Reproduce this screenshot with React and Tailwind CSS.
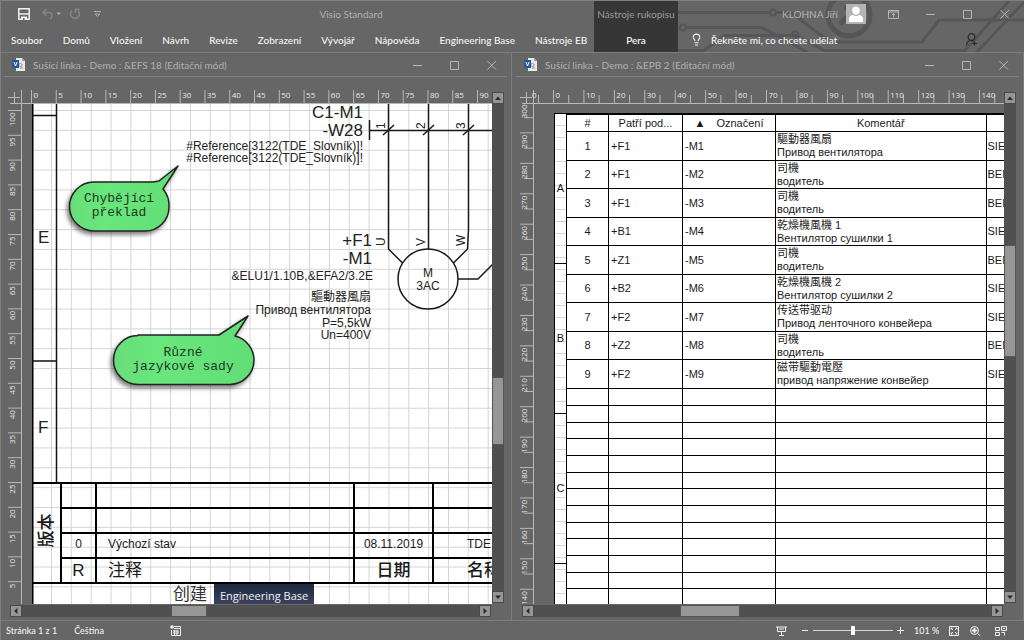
import React, { useState } from 'react';
import { Lightbulb } from 'lucide-react';

const tabs = ['Domů', 'Vložení', 'Návrh', 'Revize', 'Zobrazení', 'Vývojář', 'Nápověda', 'Engineering Base', 'Nástroje EB'];

const rows = [
    { owner: '+F1', mark: '-M1', cjk: '驅動器風扇', ru: 'Привод вентилятора', maker: 'SIEMENS' },
    { owner: '+F1', mark: '-M2', cjk: '司機', ru: 'водитель', maker: 'BENDER' },
    { owner: '+F1', mark: '-M3', cjk: '司機', ru: 'водитель', maker: 'BENDER' },
    { owner: '+B1', mark: '-M4', cjk: '乾燥機風機 1', ru: 'Вентилятор сушилки 1', maker: 'SIEMENS' },
    { owner: '+Z1', mark: '-M5', cjk: '司機', ru: 'водитель', maker: 'BENDER' },
    { owner: '+B2', mark: '-M6', cjk: '乾燥機風機 2', ru: 'Вентилятор сушилки 2', maker: 'SIEMENS' },
    { owner: '+F2', mark: '-M7', cjk: '传送带驱动', ru: 'Привод ленточного конвейера', maker: 'SIEMENS' },
    { owner: '+Z2', mark: '-M8', cjk: '司機', ru: 'водитель', maker: 'BENDER' },
    { owner: '+F2', mark: '-M9', cjk: '磁带驅動電壓', ru: 'привод напряжение конвейер', maker: 'SIEMENS' },
];

const range = (n) => Array.from({ length: n }, (_, i) => i);

const MinIcon = () => (
    <svg width="10" height="10" viewBox="0 0 10 10" stroke="currentColor"><path d="M0 5.500h9" /></svg>
);
const MaxIcon = () => (
    <svg width="10" height="10" viewBox="0 0 10 10" fill="none" stroke="currentColor"><path d="M.5 1.500h8v8h-8z" /></svg>
);
const CloseIcon = () => (
    <svg width="10" height="10" viewBox="0 0 10 10" stroke="currentColor"><path d="M.5 1l8.500 8.500M9 1L.5 9.500" /></svg>
);

const WindowButtons = () => (
    <div className="flex items-center gap-[27px] text-[#b4b4b4]">
        <button aria-label="Minimalizovat"><MinIcon /></button>
        <button aria-label="Maximalizovat"><MaxIcon /></button>
        <button aria-label="Zavřít"><CloseIcon /></button>
    </div>
);

const Circuit = () => (
    <svg className="absolute inset-0 w-full h-full" fill="none" stroke="#565656" strokeWidth="3">
        <path d="M0 11.500h91M99 11.500h14l39 29.500h92l17 -22h90" />
        <circle cx="95" cy="11.500" r="3" strokeWidth="2" />
        <circle cx="5" cy="26.500" r="3" strokeWidth="2" />
        <path d="M9 26.500h75l46 25" />
        <path d="M0 49.500h26l20 -15h73l27 15h141l46 -52M298 52l49 -52" />
        <circle cx="117" cy="33.500" r="3" strokeWidth="2" />
        <circle cx="171" cy="14" r="21" strokeWidth="5" />
        <path d="M162 23l15 -15M166 7h12v12" strokeWidth="5" />
    </svg>
);

const Header = () => (
    <header className="relative flex h-[52px] border-t border-[#808080] text-[10px]">
        <div className="flex w-[594px] flex-none flex-col">
            <div className="flex h-[26px] items-center text-[#b0b0b0]">
                <div className="flex w-[108px] items-center pl-[18px]">
                    <button aria-label="Uložit" className="text-[#f0f0f0]">
                        <svg width="12" height="12" viewBox="0 0 12 12" fill="none" stroke="currentColor" strokeWidth="1.500">
                            <path d="M.8 .8h10.400v10.400H.8zM1 6h10" />
                            <path d="M3 8.500h6v3H3z" fill="currentColor" stroke="none" />
                            <path d="M5 10h1.500v2H5z" fill="#666" stroke="none" />
                        </svg>
                    </button>
                    <button aria-label="Zpět" className="ml-[12px] text-[#858585]">
                        <svg width="19" height="12" viewBox="0 0 19 12" fill="none" stroke="currentColor" strokeWidth="1.500">
                            <path d="M4.500 1L1 4.500 4.500 8M1 4.500h6a3 3 0 0 1 3 3c0 1.500-.7 2.500-2 3.500" />
                            <path d="M14.500 4.500h4.500l-2.200 2.500z" fill="#b0b0b0" stroke="none" />
                        </svg>
                    </button>
                    <button aria-label="Znovu" className="ml-[8px] text-[#858585]">
                        <svg width="12" height="12" viewBox="0 0 12 12" fill="none" stroke="currentColor" strokeWidth="1.500">
                            <path d="M3 2.500A4.500 4.500 0 1 0 9 2.500M6.500 5V1.200h4" />
                        </svg>
                    </button>
                    <button aria-label="Přizpůsobit panel" className="ml-[13px]">
                        <svg width="7" height="7" viewBox="0 0 7 7" fill="none" stroke="currentColor"><path d="M0 .5h7M1 3l2.500 2.500L6 3z" /></svg>
                    </button>
                </div>
                <h1 className="flex-1 text-center">Visio Standard</h1>
            </div>
            <nav className="flex flex-1 items-center gap-5 pl-[11px] font-medium text-[#f5f5f5]">
                <button>Soubor</button>
                {tabs.map((tab) => <button key={tab} className="whitespace-nowrap">{tab}</button>)}
            </nav>
        </div>
        <div className="flex w-[84px] flex-none flex-col bg-[#363636]">
            <span className="flex h-[26px] items-center justify-center whitespace-nowrap text-[#9a9a9a]">Nástroje rukopisu</span>
            <button className="flex-1 font-medium text-white">Pera</button>
        </div>
        <div className="relative flex min-w-0 flex-1 flex-col overflow-hidden">
            <Circuit />
            <div className="relative flex h-[26px] items-center justify-end pr-[14px] text-[#b4b4b4]">
                <span>KLOHNA Jiří</span>
                <svg className="ml-[8px] mr-[22px]" width="20" height="20" viewBox="0 0 20 20">
                    <path d="M0 0h20v20H0z" fill="#b4b4b4" />
                    <path d="M10 2.500c2.500 0 3.800 1.700 3.800 4s-1.500 4.300-3.800 4.300-3.800-2-3.800-4.300 1.300-4 3.800-4zM3 18v-3c0-2.500 2-4 4-4 2 1.200 4 1.200 6 0 2 0 4 1.500 4 4v3z" fill="#fff" />
                </svg>
                <button aria-label="Zobrazení pásu karet" className="mr-[27px]">
                    <svg width="11" height="9" viewBox="0 0 11 9" fill="none" stroke="currentColor"><path d="M.5 .5h10v8H.5zM.5 2h10M5.500 7.500v-4M4 5l1.500-1.500L7 5" /></svg>
                </button>
                <WindowButtons />
            </div>
            <div className="relative flex flex-1 items-center pl-[12px] pr-[46px] text-[#f5f5f5]">
                <Lightbulb size={13} strokeWidth={2} />
                <input
                    aria-label="Řekněte mi"
                    placeholder="Řekněte mi, co chcete udělat"
                    className="ml-2 w-0 flex-1 bg-transparent font-medium outline-none placeholder:text-[#f5f5f5]"
                />
                <button aria-label="Sdílet" className="text-[#2b2b2b]">
                    <svg width="12" height="13" viewBox="0 0 12 13" fill="none" stroke="currentColor" strokeWidth="1.200">
                        <circle cx="5.500" cy="4" r="3.300" />
                        <path d="M.6 12.500c0-3 2-5 4.600-5 1 0 1.800.2 2.500.7M8.500 8.500v4M6.500 10.500h4.500" />
                    </svg>
                </button>
            </div>
        </div>
    </header>
);

const Arrow = ({ d, label }) => (
    <button aria-label={label} className="flex h-[12px] w-[12px] flex-none items-center justify-center border border-[#4a4a4a] bg-[#969696]">
        <svg width="6" height="6" viewBox="0 0 6 6" fill="#2b2b2b"><path d={d} /></svg>
    </button>
);

const VScroll = ({ start, size }) => (
    <div className="mt-[2px] flex h-[511px] max-h-full w-[12px] flex-col bg-[#505050]">
        <Arrow label="Nahoru" d="M0 5l3-3.500L6 5z" />
        <div className="relative flex-1">
            <div className="absolute inset-x-0 border border-[#555] bg-[#969696]" style={{ top: `${start}%`, height: `${size}%` }}></div>
        </div>
        <Arrow label="Dolů" d="M0 1.500L3 5l3-3.500z" />
    </div>
);

const HScroll = ({ start, size }) => (
    <div className="ml-[10px] mr-px mt-px flex h-[12px] bg-[#505050]">
        <Arrow label="Doleva" d="M4.500 0L1 3l3.500 3z" />
        <div className="relative flex-1">
            <div className="absolute inset-y-0 border border-[#555] bg-[#969696]" style={{ left: `${start}%`, width: `${size}%` }}></div>
        </div>
        <Arrow label="Doprava" d="M1.500 0L5 3 1.500 6z" />
    </div>
);

const HRuler = ({ origin, step, unit, count, minor }) => (
    <svg className="h-[14px] w-full flex-none" stroke="#b8b8b8">
        <path d="M8 7.500h12M14.500 2v11M21.500 0v14M10 13.500h2000" />
        {range(count).map((i) => {
            const x = origin + i * step;
            return (
                <g key={i}>
                    <path d={`M${x} 0v13`} />
                    {minor && <path d={`M${x + step / 2} 5v8`} />}
                    <text x={x + 2} y="8" fontSize="8" fill="#e8e8e8" stroke="none">{i * unit}</text>
                </g>
            );
        })}
        {minor && <path d="M26.500 5v8" />}
        {minor && <text x="20" y="8" fontSize="8" fill="#e8e8e8" stroke="none">0</text>}
    </svg>
);

const VRuler = ({ origin, step, unit, first, count, minor }) => (
    <svg className="h-full w-[22px] flex-none" stroke="#b8b8b8">
        <path d="M21.500 0v2000" />
        {range(count).map((i) => {
            const y = origin + i * step;
            return (
                <g key={i}>
                    <path d={`M8 ${y}h13`} />
                    {minor && <path d={`M12 ${y + step / 2}h9`} />}
                    <text transform={`translate(15 ${y + 2}) rotate(-90)`} textAnchor="end" fontSize="8" fill="#e8e8e8" stroke="none">{first - i * unit}</text>
                </g>
            );
        })}
    </svg>
);

const DocIcon = () => (
    <svg width="13" height="13" viewBox="0 0 13 13">
        <path d="M4 0h6l3 3v10H4z" fill="#e8e8e8" />
        <path d="M10 0v3h3" fill="#999" />
        <path d="M8.500 5l2 2-2 2-2-2zM8 10h3" fill="none" stroke="#8a8a8a" />
        <path d="M0 2h7v8H0z" fill="#2b579a" />
        <path d="M2 4l1.500 4L5 4" fill="none" stroke="#fff" />
    </svg>
);

const Pane = ({ title, hRuler, vRuler, vScroll, hScroll, children }) => (
    <section className="flex min-h-0 min-w-0 flex-col border-t border-r border-[#7c7c7c] pb-[3px]">
        <div className="mx-[4px] mb-[13px] flex h-[24px] flex-none items-center border-b border-[#808080] pl-[8px] pr-[10px] text-[10px] text-[#b0b0b0]">
            <DocIcon />
            <h2 className="ml-[8px] flex-1 whitespace-nowrap">{title}</h2>
            <WindowButtons />
        </div>
        <div className="flex min-h-0 flex-1">
            <div className="flex min-w-0 flex-1 flex-col font-['Open_Sans',sans-serif]">
                <HRuler {...hRuler} />
                <div className="flex min-h-0 flex-1">
                    <VRuler {...vRuler} />
                    {children}
                </div>
                <HScroll {...hScroll} />
            </div>
            <div className="w-[19px] flex-none">
                <VScroll {...vScroll} />
            </div>
        </div>
    </section>
);

const Callout = ({ d, x, y, lines }) => (
    <g fontFamily="'Liberation Mono', monospace" fontSize="13">
        <path d={d} fill="url(#green)" stroke="#222" strokeWidth="1.500" strokeLinejoin="round" filter="url(#shade)" />
        <text x={x} y={y} textAnchor="middle" fill="#1c3a22">{lines[0]}</text>
        <text x={x} y={y + 14} textAnchor="middle" fill="#1c3a22">{lines[1]}</text>
    </g>
);

const Schematic = () => (
    <svg className="block h-[378px] w-full" fill="#222" fontSize="12">
        <defs>
            <linearGradient id="green" x1="0" y1="0" x2="1" y2="0">
                <stop offset="0" stopColor="#68dd7a" />
                <stop offset=".3" stopColor="#69e67c" />
                <stop offset="1" stopColor="#62de76" />
            </linearGradient>
            <filter id="shade" x="-20%" y="-20%" width="140%" height="150%">
                <feDropShadow dx="-2" dy="3" stdDeviation="2" floodColor="#000" floodOpacity=".5" />
            </filter>
        </defs>

        {/* sheet frame */}
        <g stroke="#111" strokeWidth="1.500" fill="none">
            <path d="M24.500 0v379M0 11.500h25M0 257h25" />
        </g>
        <text x="6" y="139" fontSize="17">E</text>
        <text x="6" y="329" fontSize="17">F</text>

        {/* cable and motor */}
        <g stroke="#1a1a1a" strokeWidth="1.500" fill="none">
            <path d="M337.500 16v20M337.500 26.500H2000" />
            <path d="M356.500 0v145l14 14M396.500 0v145M436.500 0v125l-1 20-14 14" />
            <path d="M351 31l11-10M391 31l11-10M431 31l11-10" />
            <circle cx="396" cy="175" r="30" />
            <path d="M426 175h20l15-15" />
        </g>
        <g fontSize="12">
            <text transform="translate(353 25) rotate(-90)">1</text>
            <text transform="translate(393 25) rotate(-90)">2</text>
            <text transform="translate(433 25) rotate(-90)">3</text>
            <text transform="translate(353 142) rotate(-90)">U</text>
            <text transform="translate(393 142) rotate(-90)">V</text>
            <text transform="translate(433 142) rotate(-90)">W</text>
            <text x="396" y="173" textAnchor="middle">M</text>
            <text x="396" y="186" textAnchor="middle">3AC</text>
        </g>
        <g textAnchor="end">
            <text x="331" y="14" fontSize="17">C1-M1</text>
            <text x="331" y="32" fontSize="17">-W28</text>
            <text x="331" y="46">#Reference[3122(TDE_Slovník)]!</text>
            <text x="331" y="58">#Reference[3122(TDE_Slovník)]!</text>
            <text x="340" y="142" fontSize="17">+F1</text>
            <text x="340" y="160" fontSize="17">-M1</text>
            <text x="341" y="176">&amp;ELU1/1.10B,&amp;EFA2/3.2E</text>
            <text x="339" y="197">驅動器風扇</text>
            <text x="339" y="210">Привод вентилятора</text>
            <text x="339" y="223">P=5,5kW</text>
            <text x="339" y="235">Un=400V</text>
        </g>

        <Callout
            d="M62 78h59l6-1L146 62l-15 23a25 25 0 0 1 6 18a24 24 0 0 1-24 24H62a24.500 24.500 0 0 1 0-49z"
            x="87" y={98} lines={['Chybějící', 'překlad']}
        />
        <Callout
            d="M106 231h81l29-19-13 20a25 25 0 0 1 19 24a24.500 24.500 0 0 1-24 24.500H106a24.500 24.500 0 0 1 0-49z"
            x="151" y={252} lines={['Různé', 'jazykové sady']}
        />
    </svg>
);

const TitleBlock = () => (
    <table className="w-full table-fixed border-collapse text-[12px] text-[#1a1a1a]">
        <colgroup>
            <col className="w-[29px]" />
            <col className="w-[35px]" />
            <col />
            <col className="w-[79px]" />
            <col className="w-[59px]" />
        </colgroup>
        <tbody>
            <tr className="h-[25px]">
                <th scope="row" rowSpan={4} className="border-y-2 border-r-2 border-black p-0 text-[17px] font-medium">
                    <span className="block -rotate-90 whitespace-nowrap">版本</span>
                </th>
                {range(4).map((i) => <td key={i} className="border-t-2 border-b-2 border-l-2 border-black"></td>)}
            </tr>
            <tr className="h-[25px]">
                {range(4).map((i) => <td key={i} className="border-b-2 border-l-2 border-black"></td>)}
            </tr>
            <tr className="h-[25px] leading-[20px]">
                <td className="border-2 border-black p-0 text-center align-top">0</td>
                <td className="border-2 border-black py-0 pl-[11px] align-top">Výchozí stav</td>
                <td className="border-2 border-black p-0 text-center align-top">08.11.2019</td>
                <td className="overflow-hidden border-y-2 border-black py-0 pl-[33px] pr-0 align-top">TDE</td>
            </tr>
            <tr className="h-[25px] text-[17px] leading-[20px]">
                <td className="border-2 border-black p-0 text-center">R</td>
                <td className="border-2 border-black py-0 pl-[11px]">注释</td>
                <td className="border-2 border-black p-0 text-center font-medium">日期</td>
                <td className="overflow-hidden whitespace-nowrap border-y-2 border-black py-0 pl-[33px] pr-0 font-medium">名称</td>
            </tr>
        </tbody>
    </table>
);

const DrawingSheet = () => (
    <div className="min-w-0 flex-1 overflow-hidden pl-[10px]">
        <div className="relative h-full bg-white font-['Liberation_Sans','Noto_Sans_CJK_SC',sans-serif]">
            <svg className="absolute inset-0 h-full w-full">
                <pattern id="grid" width="19.850" height="19.850" x="19" y="6" patternUnits="userSpaceOnUse">
                    <path d="M.5 0v19.850M0 .5h19.850" stroke="#d4d4d4" fill="none" />
                </pattern>
                <rect width="100%" height="100%" fill="url(#grid)" />
                <path d="M.750 0v2000" stroke="#000" strokeWidth="1.500" />
            </svg>
            <div className="relative">
                <Schematic />
                <TitleBlock />
                <div className="flex h-[22px] items-center pl-[141px]">
                    <span className="text-[17px] leading-[20px] text-[#333]">创建</span>
                    <span className="ml-[7px] flex h-full items-center bg-linear-to-b from-[#1f2940] to-[#3d4562] px-[6px] font-['Open_Sans',sans-serif] text-[11px] text-[#f0f0f0]">
                        Engineering Base
                    </span>
                </div>
            </div>
        </div>
    </div>
);

const ListSheet = () => (
    <div className="min-w-0 flex-1 overflow-hidden pl-[20px] pt-[9px] font-['Liberation_Sans','Noto_Sans_CJK_TC',sans-serif]">
        <div className="flex h-full overflow-hidden border-l border-t border-black bg-white text-[11px] text-[#1a1a1a]">
            <div className="w-[11px] flex-none bg-[repeating-linear-gradient(to_bottom,transparent_0_11px,#d8d8d8_11px_12px)]">
                {['A', 'B', 'C', 'D'].map((zone) => (
                    <div key={zone} className="flex h-[150px] items-center justify-center border-b border-black">{zone}</div>
                ))}
            </div>
            <div className="min-w-0 flex-1">
                <table className="w-full table-fixed border-collapse leading-[13px]">
                    <colgroup>
                        <col className="w-[42px]" />
                        <col className="w-[74px]" />
                        <col className="w-[93px]" />
                        <col />
                        <col className="w-[18px]" />
                    </colgroup>
                    <thead>
                        <tr className="h-[17px]">
                            <th className="border border-black p-0 font-normal">#</th>
                            <th className="border border-black p-0 font-normal">Patří pod...</th>
                            <th className="border border-black p-0 font-normal"><span className="mr-[11px]">▲</span>Označení</th>
                            <th className="border border-black p-0 font-normal">Komentář</th>
                            <th className="border-y border-black p-0"></th>
                        </tr>
                    </thead>
                    <tbody>
                        {rows.map((row, i) => (
                            <tr key={row.mark} className="odd:h-[29px] even:h-[28px]">
                                <td className="border border-black p-0 text-center">{i + 1}</td>
                                <td className="border border-black py-0 pl-[2px]">{row.owner}</td>
                                <td className="border border-black py-0 pl-[2px]">{row.mark}</td>
                                <td className="whitespace-nowrap border border-black py-0 pl-px">{row.cjk}<br />{row.ru}</td>
                                <td className="overflow-hidden border-y border-black py-0 pl-px pr-0">{row.maker}</td>
                            </tr>
                        ))}
                    </tbody>
                    <tbody>
                        {range(16).map((i) => (
                            <tr key={i} className="h-[17px] nth-[3n]:h-[16px]">
                                {range(4).map((c) => <td key={c} className="border border-black p-0"></td>)}
                                <td className="border-y border-black p-0"></td>
                            </tr>
                        ))}
                    </tbody>
                </table>
            </div>
        </div>
    </div>
);

const StatusBar = () => {
    const [zoom, setZoom] = useState(101);

    return (
        <footer className="flex h-[20px] flex-none items-center border-t border-[#7c7c7c] pl-[6px] pr-[17px] text-[9px] font-medium text-[#f0f0f0]">
            <span>Stránka 1 z 1</span>
            <span className="ml-[17px]">Čeština</span>
            <button aria-label="Záznam makra" className="ml-[66px]">
                <svg width="11" height="11" viewBox="0 0 11 11" fill="none" stroke="currentColor">
                    <path d="M4 1.500h6.500v9h-9V5M4 3.500h6M3 6h6M3 8h6M4.500 5v5M7 5v5" />
                    <circle cx="2" cy="2" r="1.800" fill="currentColor" stroke="none" />
                </svg>
            </button>
            <div className="ml-auto flex items-center">
                <button aria-label="Prezentace" className="mr-[15px]">
                    <svg width="11" height="10" viewBox="0 0 11 10" fill="none" stroke="currentColor"><path d="M0 1h11M1.500 1v4.500h8V1M3 3h5M5.500 5.500V9M3 9.500h5" /></svg>
                </button>
                <button aria-label="Oddálit"><svg width="7" height="7" viewBox="0 0 7 7" stroke="currentColor"><path d="M0 3.500h6" /></svg></button>
                <input
                    type="range"
                    aria-label="Lupa"
                    min="10"
                    max="192"
                    value={zoom}
                    onChange={(e) => setZoom(Number(e.target.value))}
                    className="mx-[4px] h-[10px] w-[80px] appearance-none bg-[linear-gradient(#d8d8d8,#d8d8d8)] bg-[length:100%_1px] bg-center bg-no-repeat [&::-webkit-slider-thumb]:h-[9px] [&::-webkit-slider-thumb]:w-[4px] [&::-webkit-slider-thumb]:appearance-none [&::-webkit-slider-thumb]:bg-white"
                />
                <button aria-label="Přiblížit"><svg width="7" height="7" viewBox="0 0 7 7" stroke="currentColor"><path d="M0 3.500h7M3.500 0v7" /></svg></button>
                <span className="w-[45px] pl-[10px]">{zoom} %</span>
                <button aria-label="Přizpůsobit stránku">
                    <svg width="10" height="10" viewBox="0 0 10 10" fill="none" stroke="currentColor"><path d="M.5 .5h9v9h-9zM2 2l2 2M8 2L6 4M2 8l2-2M8 8L6 6M2 3.500V2h1.500M6.500 2H8v1.500M2 6.500V8h1.500M6.500 8H8V6.500" /></svg>
                </button>
                <button aria-label="Posun a lupa" className="ml-[11px]">
                    <svg width="11" height="10" viewBox="0 0 11 10" fill="none" stroke="currentColor"><circle cx="4.500" cy="4.500" r="4" /><path d="M1.500 4.500h6M4.500 1.500v6M7.500 7.500L10.500 10" /><circle cx="4.500" cy="4.500" r="1.800" /></svg>
                </button>
                <button aria-label="Přepnout okna" className="ml-[14px]">
                    <svg width="12" height="10" viewBox="0 0 12 10" fill="none" stroke="currentColor"><path d="M.5 1.500h4v3h-4zM6.500 .5h5v4h-5zM.5 6.500h4v3h-4zM6.500 6.500h3v3M8 2.500h2" /></svg>
                </button>
            </div>
        </footer>
    );
};

const App = () => (
    <div className="flex h-screen flex-col overflow-hidden bg-[#666] font-['Lato','Open_Sans',sans-serif] leading-none shadow-[inset_1px_0_#808080]">
        <Header />
        <main className="grid min-h-0 flex-1 grid-cols-2">
            <Pane
                title="Sušící linka - Demo : &EFS 18 (Editační mód)"
                hRuler={{ origin: 31.5, step: 24.78, unit: 5, count: 19 }}
                vRuler={{ origin: 6.5, step: 24.8, unit: 5, first: 100, count: 20 }}
                vScroll={{ start: 56, size: 14 }}
                hScroll={{ start: 32.5, size: 8 }}
            >
                <DrawingSheet />
            </Pane>
            <Pane
                title="Sušící linka - Demo : &EPB 2 (Editační mód)"
                hRuler={{ origin: 41.5, step: 30.43, unit: 10, count: 15, minor: true }}
                vRuler={{ origin: -1.5, step: 30.42, unit: 10, first: 300, count: 17, minor: true }}
                vScroll={{ start: 29, size: 23 }}
                hScroll={{ start: 32, size: 13 }}
            >
                <ListSheet />
            </Pane>
        </main>
        <StatusBar />
    </div>
);

export default App;
